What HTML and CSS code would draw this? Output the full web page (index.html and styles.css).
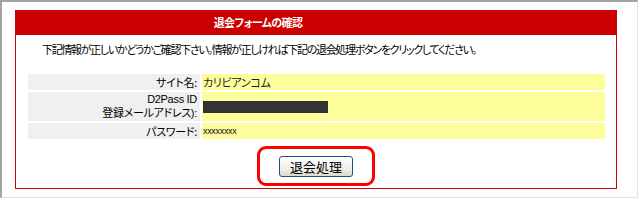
FILE: index.html
```html
<!DOCTYPE html>
<html>
<head>
    <meta charset="utf-8">
    <title>退会フォームの確認</title>
    <link rel="stylesheet" href="styles.css">
</head>
<body>
    <div class="frame">
        <div class="confirm-box">
            <div class="confirm-title">退会フォームの確認</div>
            <p class="confirm-intro">下記情報が正しいかどうかご確認下さい。情報が正しければ下記の退会処理ボタンをクリックしてください。</p>

            <div class="info-table">
                <div class="info-label">サイト名:</div>
                <div class="info-value">カリビアンコム</div>

                <div class="info-label tall">D2Pass ID<br>登録メールアドレス):</div>
                <div class="info-value tall"><span class="masked"></span></div>

                <div class="info-label">パスワード:</div>
                <div class="info-value small">xxxxxxxx</div>
            </div>

            <div class="submit-row">
                <div class="highlight">
                    <button class="submit-button" type="button">退会処理</button>
                </div>
            </div>
        </div>
    </div>
</body>
</html>
```

FILE: styles.css
```css
body {
    margin: 0;
    font-family: "Noto Sans CJK JP", "DejaVu Sans", sans-serif;
    font-size: 11px;
    color: #000;
    background: #fff;
}
.frame {
    width: 638px;
    height: 198px;
    box-sizing: border-box;
    border-top: 2px solid #a3a3a3;
    border-left: 2px solid #a3a3a3;
    border-right: 1px solid #e2e2e2;
    border-bottom: 1px solid #e2e2e2;
    padding: 8px 0 0 13px;
}
.confirm-box {
    width: 602px;
    box-sizing: border-box;
    border: 1px solid #cc0000;
    border-top: none;
    padding-bottom: 2px;
}
.confirm-title {
    height: 25px;
    line-height: 25px;
    margin: 0 -1px;
    padding-right: 116px;
    background: #cc0000;
    color: #fff;
    font-weight: bold;
    letter-spacing: -0.6px;
    text-align: center;
    font-feature-settings: "palt";
}
.confirm-intro {
    margin: 0;
    padding: 7px 0 0 26px;
    line-height: 14px;
    letter-spacing: -1.3px;
    font-feature-settings: "palt";
}
.info-table {
    display: grid;
    grid-template-columns: 172px 403px;
    grid-template-rows: 16px 29px 16px;
    gap: 2px;
    margin: 18px 0 0 12px;
}
.info-label {
    background: #f0f0f0;
    text-align: right;
    padding-right: 3px;
    line-height: 16px;
    letter-spacing: -0.3px;
    font-feature-settings: "palt";
}
.info-label.tall {
    font-family: "Liberation Sans", "Noto Sans CJK JP", sans-serif;
    line-height: 14px;
}
.info-value {
    background: #fdfd9b;
    padding-left: 1px;
    line-height: 16px;
    color: #222;
    letter-spacing: -0.3px;
    font-feature-settings: "palt";
}
.info-value.tall {
    display: flex;
    align-items: center;
}
.info-value.small {
    font-size: 9px;
}
.masked {
    display: block;
    width: 125px;
    height: 12px;
    background: #333;
}
.submit-row {
    display: flex;
    justify-content: center;
    margin-top: 7px;
}
.highlight {
    width: 118px;
    height: 40px;
    box-sizing: border-box;
    border: 3px solid #ff0000;
    border-radius: 9px;
    display: flex;
    align-items: center;
    justify-content: center;
}
.submit-button {
    width: 74px;
    height: 21px;
    padding: 0;
    border: 1px solid #2a4d78;
    border-radius: 3px;
    background: linear-gradient(#ffffff, #f1f0ea 60%, #dcd9cc);
    font-family: "Noto Sans CJK JP", sans-serif;
    font-size: 13px;
    line-height: 19px;
    color: #000;
}
```
